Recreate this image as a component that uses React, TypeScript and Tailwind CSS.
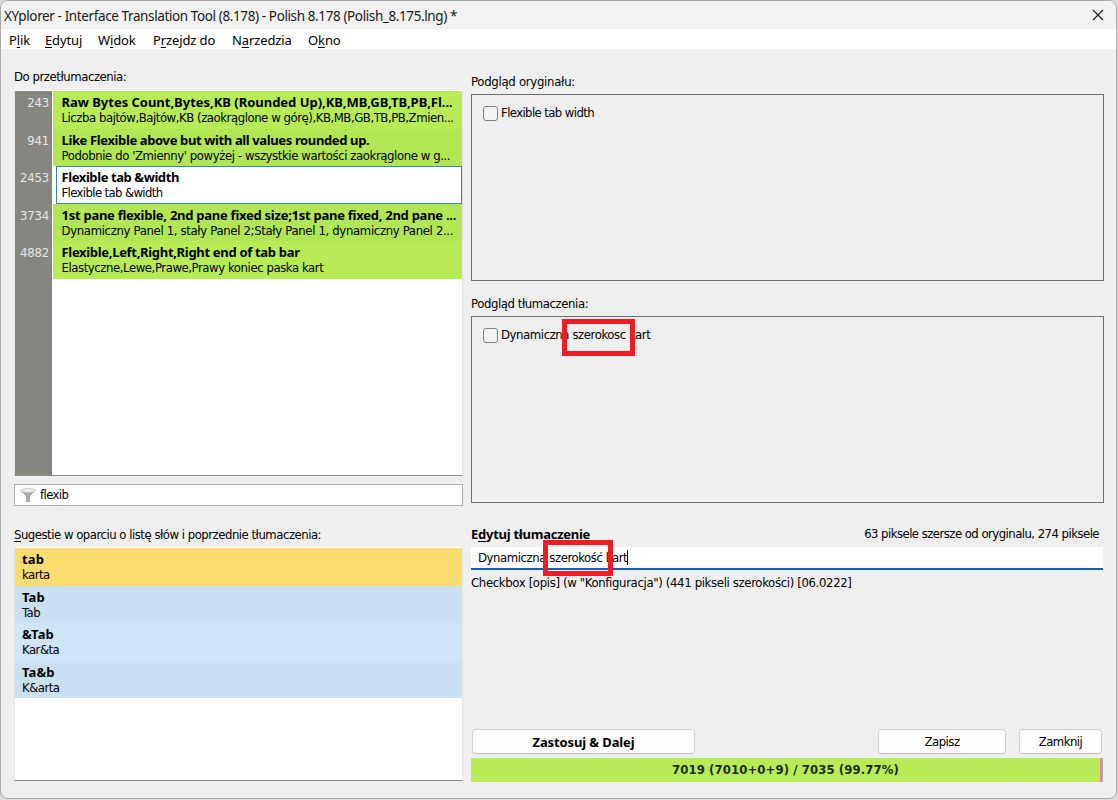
import { clsx } from "clsx";

type Entry = { id: string; source: string; target: string; sourceFit: string; targetFit: string; tone: string };

const entries: Entry[] = [
  {
    id: "243",
    source: "Raw Bytes Count,Bytes,KB (Rounded Up),KB,MB,GB,TB,PB,Fl...",
    target: "Liczba bajtów,Bajtów,KB (zaokrąglone w górę),KB,MB,GB,TB,PB,Zmien...",
    sourceFit: "tracking-[-0.02px]",
    targetFit: "tracking-[-0.45px]",
    tone: "bg-[#b7ec57]",
  },
  {
    id: "941",
    source: "Like Flexible above but with all values rounded up.",
    target: "Podobnie do 'Zmienny' powyżej - wszystkie wartości zaokrąglone w g...",
    sourceFit: "tracking-[-0.37px]",
    targetFit: "tracking-[-0.41px]",
    tone: "bg-[#b1e654]",
  },
  {
    id: "2453",
    source: "Flexible tab &width",
    target: "Flexible tab &width",
    sourceFit: "tracking-[-0.41px]",
    targetFit: "tracking-[-0.63px]",
    tone: "",
  },
  {
    id: "3734",
    source: "1st pane flexible, 2nd pane fixed size;1st pane fixed, 2nd pane ...",
    target: "Dynamiczny Panel 1, stały Panel 2;Stały Panel 1, dynamiczny Panel 2...",
    sourceFit: "tracking-[-0.26px]",
    targetFit: "tracking-[-0.34px]",
    tone: "bg-[#b1e654]",
  },
  {
    id: "4882",
    source: "Flexible,Left,Right,Right end of tab bar",
    target: "Elastyczne,Lewe,Prawe,Prawy koniec paska kart",
    sourceFit: "tracking-[-0.31px]",
    targetFit: "tracking-[-0.43px]",
    tone: "bg-[#b7ec57]",
  },
];

const suggestions = [
  { source: "tab", target: "karta", tone: "bg-[#fadc6f]" },
  { source: "Tab", target: "Tab", tone: "bg-[#cae0f3]" },
  { source: "&Tab", target: "Kar&ta", tone: "bg-[#cfe6f9]" },
  { source: "Ta&b", target: "K&arta", tone: "bg-[#cae0f3]" },
];

const menus = [
  ["P", "l", "ik", "w-9"],
  ["", "E", "dytuj", "w-[53px]"],
  ["W", "i", "dok", "w-[55px]"],
  ["P", "r", "zejdz do", "w-[79px]"],
  ["N", "a", "rzedzia", "w-[76px]"],
  ["O", "k", "no", "w-10"],
];

function Key({ children }: { children: string }) {
  return <span className="underline decoration-1 underline-offset-2">{children}</span>;
}

function Pair({ source, target, sourceFit, targetFit }: { source: string; target: string; sourceFit: string; targetFit: string }) {
  return (
    <div className="flex flex-col whitespace-nowrap leading-[15px]">
      <b className={clsx("font-['Noto_Sans',sans-serif]", sourceFit)}>{source}</b>
      <span className={targetFit}>{target}</span>
    </div>
  );
}

function Preview({ text, fit }: { text: string; fit: string }) {
  return (
    <div className="h-[187px] border border-[#6e6e6e] pt-[10px] pl-[11px]">
      <label className="flex h-4 items-center gap-[3px]">
        <span className="size-[15px] rounded-[3px] border border-[#808080] bg-[#f4f4f4]" />
        <span className={clsx("whitespace-nowrap leading-4", fit)}>{text}</span>
      </label>
    </div>
  );
}

function Button({ children, className }: { children: string; className: string }) {
  return (
    <button className={clsx("h-[25px] rounded-[4px] border border-[#d2d2d2] border-b-[#c0c0c0] bg-[#fdfdfd] leading-[22px] whitespace-nowrap", className)}>
      {children}
    </button>
  );
}

export default function App() {
  return (
    <div className="h-[800px] w-[1118px] overflow-hidden bg-[#dcdcdc] pr-px pb-px font-['DejaVu_Sans_Condensed','DejaVu_Sans',sans-serif] text-[13px] text-black [font-stretch:condensed]">
      <div className="relative flex h-[799px] flex-col overflow-hidden rounded-[8px] border border-[#a9a9a9] bg-[#efefef]">
        <header className="flex h-7 shrink-0 items-center justify-between bg-[#f2f2f2] pr-3 pl-[3px] font-['Noto_Sans',sans-serif] text-[#1a1a1a]">
          <h1 className="pt-px text-[13.5px] leading-[18px] tracking-[-0.39px] whitespace-nowrap">
            XYplorer - Interface Translation Tool (8.178) - Polish 8.178 (Polish_8.175.lng) *
          </h1>
          <svg className="size-3" viewBox="0 0 12 12" fill="none" stroke="#222" strokeWidth="1.3">
            <path d="M1 1 11 11M11 1 1 11" />
          </svg>
        </header>
        <nav className="flex h-5 shrink-0 items-center bg-white pt-[3px] pl-2 font-['Noto_Sans',sans-serif] leading-[17px] tracking-[-0.12px]">
          {menus.map(([before, key, after, width]) => (
            <span key={before + key} className={clsx("shrink-0 whitespace-nowrap", width)}>
              {before}
              <Key>{key}</Key>
              {after}
            </span>
          ))}
        </nav>

        <main className="flex gap-2 pl-[13px]">
          <section className="flex w-[449px] flex-col">
            <h2 className="mt-[19px] mb-1 h-[18px] leading-[18px] tracking-[-0.45px]">Do przetłumaczenia:</h2>
            <div className="h-[386px] border-b border-[#8c8c8c] border-x border-x-[#e4e4e4] bg-white pt-px">
              <div className="h-full border-l-[37px] border-[#86857f]">
                {entries.map((e) => (
                  <div key={e.id} className="-ml-[37px] flex h-[37.6px]">
                    <span className="w-[37px] pt-1 pr-[3px] text-right leading-[15px] tracking-[-0.19px] text-[#e6e6e6]">{e.id}</span>
                    {e.tone ? (
                      <div className={clsx("ml-px flex-1 pt-1 pl-[8.5px]", e.tone)}>
                        <Pair {...e} />
                      </div>
                    ) : (
                      <div className="ml-1 flex-1 border border-[#2f86c9] pt-[3px] pl-[4.5px]">
                        <Pair {...e} />
                      </div>
                    )}
                  </div>
                ))}
              </div>
            </div>
            <div className="mt-2 flex h-[22px] items-center border border-[#adb0b5] bg-white pl-[5px]">
              <svg className="mr-1 h-[15px] w-4" viewBox="0 0 16 15">
                <path d="M.5 2.5 6 8.3V14h4V8.3l5.5-5.8Z" fill="#a9a9a9" />
                <ellipse cx="8" cy="2.5" rx="7.4" ry="1.9" fill="#f2f2f2" stroke="#bdbdbd" strokeWidth=".8" />
              </svg>
              <span className="tracking-[-0.6px]">flexib</span>
            </div>
            <h2 className="mt-5 mb-[3px] h-[18px] leading-[18px] tracking-[-0.49px] whitespace-nowrap">
              <Key>S</Key>ugestie w oparciu o listę słów i poprzednie tłumaczenia:
            </h2>
            <div className="h-[234px] border-b border-[#8c8c8c] border-x border-x-[#e4e4e4] bg-white pt-px">
              {suggestions.map((s) => (
                <div key={s.source} className={clsx("h-[37.6px] pt-1 pl-[7px]", s.tone)}>
                  <Pair source={s.source} target={s.target} sourceFit="tracking-[0.1px]" targetFit="tracking-[-0.5px]" />
                </div>
              ))}
            </div>
          </section>

          <section className="flex w-[633px] flex-col">
            <h2 className="mt-6 mb-[3px] h-[18px] leading-[18px] tracking-[-0.28px]">Podgląd oryginału:</h2>
            <Preview text="Flexible tab width" fit="tracking-[-0.6px]" />
            <h2 className="mt-[14px] mb-[3px] h-[18px] leading-[18px] tracking-[-0.42px]">Podgląd tłumaczenia:</h2>
            <Preview text="Dynamiczna szerokosc kart" fit="tracking-[-0.42px]" />
            <div className="mt-[22px] mb-1 flex h-[18px] justify-between pr-[5px] leading-[18px] whitespace-nowrap">
              <b className="font-['Noto_Sans',sans-serif] tracking-[-0.26px]">
                E<Key>d</Key>ytuj tłumaczenie
              </b>
              <span className="tracking-[-0.54px]">63 piksele szersze od oryginalu, 274 piksele</span>
            </div>
            <div className="mr-px flex h-[23px] items-center border-b-2 border-[#1160b7] bg-white pl-[7px]">
              <span className="tracking-[-0.43px] whitespace-nowrap">Dynamiczna szerokość kart</span>
              <span className="h-[15px] w-px bg-black" />
            </div>
            <p className="mt-1 h-[18px] leading-[18px] tracking-[-0.35px] whitespace-nowrap">
              Checkbox [opis] (w "Konfiguracja") (441 pikseli szerokości) [06.0222]
            </p>
            <div className="mt-[137px] flex pr-px pl-px">
              <Button className="w-[223px] font-['Noto_Sans',sans-serif] font-bold tracking-[-0.11px]">{"Zastosuj & Dalej"}</Button>
              <Button className="ml-[183px] w-32 tracking-[-0.5px]">Zapisz</Button>
              <Button className="ml-[13px] w-[83px] tracking-[-0.55px]">Zamknij</Button>
            </div>
            <div className="mt-1 mr-px h-6 border-r border-[#a9a6cf]">
              <div className="h-full border-r-2 border-[#f08a7c] bg-[#b7ec57] text-center leading-6 font-bold tracking-[0.09px] text-[#1c2b10]">
                7019 (7010+0+9) / 7035 (99.77%)
              </div>
            </div>
          </section>
        </main>

        <div className="absolute top-[318px] left-[561px] h-[37px] w-[73px] border-[5px] border-[#ee1c25]" />
        <div className="absolute top-[539px] left-[542px] h-9 w-[70px] border-[5px] border-[#ee1c25]" />
      </div>
    </div>
  );
}
